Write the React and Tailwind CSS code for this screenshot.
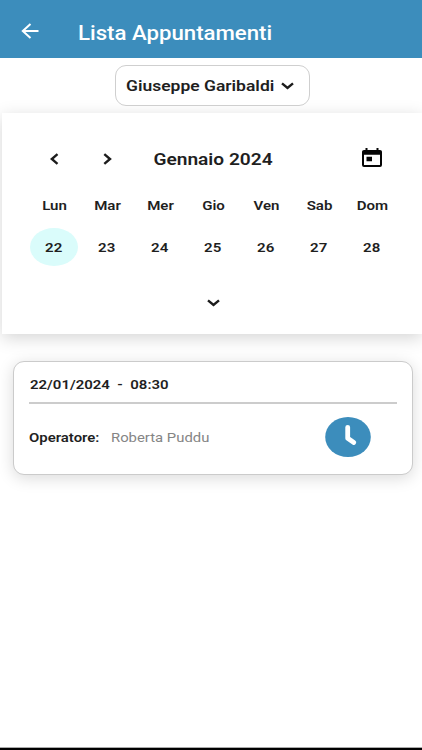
const days = [
  { name: "Lun", number: 22 },
  { name: "Mar", number: 23 },
  { name: "Mer", number: 24 },
  { name: "Gio", number: 25 },
  { name: "Ven", number: 26 },
  { name: "Sab", number: 27 },
  { name: "Dom", number: 28 },
]

function ChevronDown(){
return(
<svg width="13" height="8" viewBox="0 0 13 8" fill="none" stroke="#1c1c1c" strokeWidth="2.4">
<path d="M1 1.3L6.5 6L12 1.3" />
</svg>
)
}

function App(){

return(

<div className="flex h-[750px] w-[422px] flex-col overflow-hidden bg-white text-[#1f1f1f] [font-family:Roboto,sans-serif]">

{/* Header */}

<div className="relative z-10 flex h-[58px] shrink-0 items-center bg-[#3c8dbc] pt-[7px] pl-[21px]">

<button className="w-[57px] pb-[3px]">
<svg width="18" height="16" viewBox="0 0 18 16" fill="none" stroke="white" strokeWidth="2">
<path d="M17.5 8H2M9.5 1L1.8 8L9.5 15" />
</svg>
</button>

<h1 className="origin-left scale-x-[1.11] text-[20px] font-medium whitespace-nowrap text-white">
Lista Appuntamenti
</h1>

</div>

{/* Client select */}

<div className="flex h-[55px] shrink-0 justify-center pt-[7px]">

<button className="relative z-10 ml-[3px] flex h-[41px] w-[195px] items-center rounded-[11px] border border-[#cfcfcf] bg-white pt-px pl-[9.5px]">

<span className="w-[155px] text-left">
<span className="inline-block origin-left scale-x-[1.165] text-[15px] font-semibold whitespace-nowrap">
Giuseppe Garibaldi
</span>
</span>

<ChevronDown />

</button>

</div>

{/* Calendar */}

<div className="ml-[2px] h-[221px] shrink-0 bg-white px-[25.5px] pt-[30px] shadow-[0_4px_16px_rgba(0,0,0,0.17)]">

<div className="grid w-[371px] grid-cols-7 items-center justify-items-center">

<button>
<svg width="9" height="12" viewBox="0 0 9 12" fill="none" stroke="#1c1c1c" strokeWidth="2.4">
<path d="M7.5 1.2L1.8 6L7.5 10.8" />
</svg>
</button>

<button>
<svg width="9" height="12" viewBox="0 0 9 12" fill="none" stroke="#1c1c1c" strokeWidth="2.4">
<path d="M1.3 1.2L7 6L1.3 10.8" />
</svg>
</button>

<h2 className="col-span-3 scale-x-[1.125] text-[17px] leading-[32px] font-semibold whitespace-nowrap">
Gennaio 2024
</h2>

<span />

<button className="pb-[3px]">
<svg width="20" height="19" viewBox="0 0 20 20" preserveAspectRatio="none">
<path fillRule="evenodd" fill="#050505" d="M3.5 0H5.5V2H14.5V0H16.5V2H18Q20 2 20 4V18Q20 20 18 20H2Q0 20 0 18V4Q0 2 2 2H3.5ZM2 7V18H18V7ZM4.5 9.3H10V14H4.5Z" />
</svg>
</button>

</div>

<div className="mt-[17px] grid w-[371px] grid-cols-7 text-center text-[13.5px] leading-[26px] font-semibold">
{days.map((day) => (
<span key={day.name} className="scale-x-[1.115]">{day.name}</span>
))}
</div>

<div className="mt-[10px] grid w-[371px] grid-cols-7 justify-items-center text-[13.5px] font-semibold">
{days.map((day) => (
<button
key={day.number}
className={day.number === 22 ? "h-[38px] w-[48px] rounded-[50%] bg-[#dafcfb] pt-px" : "h-[38px] w-[48px] pt-px"}
>
<span className="inline-block scale-x-[1.115]">{day.number}</span>
</button>
))}
</div>

<div className="mt-[33px] flex w-[371px] justify-center">
<ChevronDown />
</div>

</div>

{/* Appointment */}

<div className="mt-[27px] ml-[13px] h-[114px] w-[400px] shrink-0 rounded-[11px] border border-[#cbcbcb] bg-white px-[15px] shadow-[0_3px_16px_rgba(0,0,0,0.15)]">

<div className="h-[42px] border-b-2 border-[#cccccc] pt-[10px] pl-[0.5px]">
<span className="inline-block origin-left scale-x-[1.11] text-[13.5px] leading-[20px] font-semibold whitespace-pre">
{"22/01/2024  -  08:30"}
</span>
</div>

<div className="flex items-center pt-[13px]">

<span className="w-[82px] pt-px text-[13.5px] font-semibold">
<span className="inline-block origin-left scale-x-[1.105]">Operatore:</span>
</span>

<span className="w-[214px] pt-px text-[13.5px] text-[#858585]">
<span className="inline-block origin-left scale-x-[1.1] whitespace-nowrap">Roberta Puddu</span>
</span>

<svg width="46" height="40" viewBox="0 0 46 40">
<ellipse cx="23" cy="20" rx="22.8" ry="20" fill="#3c8dbc" />
<path d="M22.7 10.3V21.3L28.8 25.5" fill="none" stroke="white" strokeWidth="4.8" strokeLinecap="round" strokeLinejoin="round" />
</svg>

</div>

</div>

{/* Bottom bar */}

<div className="mt-auto h-[3px] shrink-0 border-t border-[#aaaaaa] bg-black" />

</div>

)

}

export default App
